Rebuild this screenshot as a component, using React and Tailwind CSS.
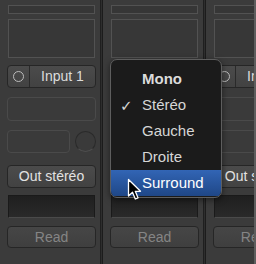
import React from "react";

const Column = ({ label, out }) => (
  <div className="flex flex-col w-[100px] shrink-0 pl-[7px] pr-[4px]">
    {/* top strip */}
    <div className="mt-[5px] mx-[1px] h-[9px] border border-[#525252] bg-[#363636]" />
    {/* big box */}
    <div className="mt-[5px] mx-[1px] h-[39px] border border-[#525252] bg-[#373737]" />

    {/* input button */}
    <div className="mt-[7px] h-[23px] flex rounded-[4px] border border-[#262626] bg-gradient-to-b from-[#4b4b4b] to-[#424242] text-[#dcdcdc] text-[14px]">
      <div className="w-[22px] flex items-center justify-center border-r border-[#2a2a2a]">
        <div className="w-[11px] h-[11px] rounded-full border-[1.5px] border-[#bcbcbc]" />
      </div>
      <div className="flex-1 flex items-center justify-center">{label}</div>
    </div>

    <div className="mt-[9px] h-[24px] rounded-[4px] border border-[#4a4a4a] bg-[#3a3a3a]" />

    <div className="mt-[9px] h-[23px] flex items-center gap-[5px]">
      <div className="w-[63px] h-[23px] rounded-[4px] border border-[#4a4a4a] bg-[#3a3a3a]" />
      <div className="w-[21px] h-[21px] rounded-full border border-[#2a2a2a] border-b-[#4e4e4e] bg-[#3a3a3a]" />
    </div>

    {/* output button */}
    <div className="mt-[12px] h-[23px] flex items-center justify-center rounded-[4px] border border-[#262626] bg-gradient-to-b from-[#4b4b4b] to-[#424242] text-[#e2e2e2] text-[14px]">
      {out}
    </div>

    <div className="mt-[7px] mx-[1px] h-[23px] border border-[#1a1a1a] border-b-[#4a4a4a] bg-gradient-to-b from-[#1f1f1f] to-[#2a2a2a]" />

    <div className="mt-[8px] h-[22px] flex items-center justify-center rounded-[4px] border border-[#262626] bg-gradient-to-b from-[#464646] to-[#3f3f3f] text-[#858585] text-[14px]">
      Read
    </div>
  </div>
);

const Separator = () => (
  <div className="w-[3px] shrink-0 flex">
    <div className="w-[1px] bg-[#1f1f1f]" />
    <div className="w-[1px] bg-[#2e2e2e]" />
    <div className="w-[1px] bg-[#1c1c1c]" />
  </div>
);

const items = ["Mono", "Stéréo", "Gauche", "Droite", "Surround"];

export default function App() {
  return (
    <div className="relative w-[256px] h-[264px] overflow-hidden bg-[#3b3b3b] flex font-['Liberation_Sans',Arial,sans-serif]">
      <Column label="Input 1" out="Out stéréo" />
      <Separator />
      {/* middle strip: its labels sit under the popup */}
      <Column label="" out="" />
      <Separator />
      <Column label="Input 1" out="Out stéréo" />

      <div className="absolute right-0 top-0 w-[2px] h-full bg-[#5d5d5d]" />

      {/* popup menu */}
      <div className="absolute left-[110px] top-[59px] w-[112px] h-[139px] rounded-[7px] border border-[#5e5e5e] bg-[#1b1b1b] shadow-[0_2px_6px_rgba(0,0,0,0.5)] pt-[6px] overflow-hidden">
        {items.map((it, i) => {
          const active = it === "Surround";
          return (
            <div
              key={it}
              className={`relative h-[26px] flex items-center pl-[31px] text-[15px] ${
                active
                  ? "bg-gradient-to-b from-[#3265b5] to-[#1f4787] text-white"
                  : "text-[#d6d6d6]"
              } ${i === 0 ? "font-bold text-[#dcdcdc]" : ""}`}
            >
              {it === "Stéréo" && (
                <span className="absolute left-[9px] top-[3px] text-[15px] text-[#d6d6d6] font-['DejaVu_Sans',sans-serif]">
                  ✓
                </span>
              )}
              {it}
            </div>
          );
        })}
      </div>

      {/* mouse cursor */}
      <svg
        className="absolute left-[127px] top-[178px]"
        width="16"
        height="24"
        viewBox="0 0 16 24"
      >
        <path
          d="M1.5 1.5 L1.5 18 L5.5 14.2 L8.3 21 L11 19.8 L8.3 13.3 L13.5 13.3 Z"
          fill="#000"
          stroke="#fff"
          strokeWidth="1.3"
          strokeLinejoin="round"
        />
      </svg>
    </div>
  );
}
